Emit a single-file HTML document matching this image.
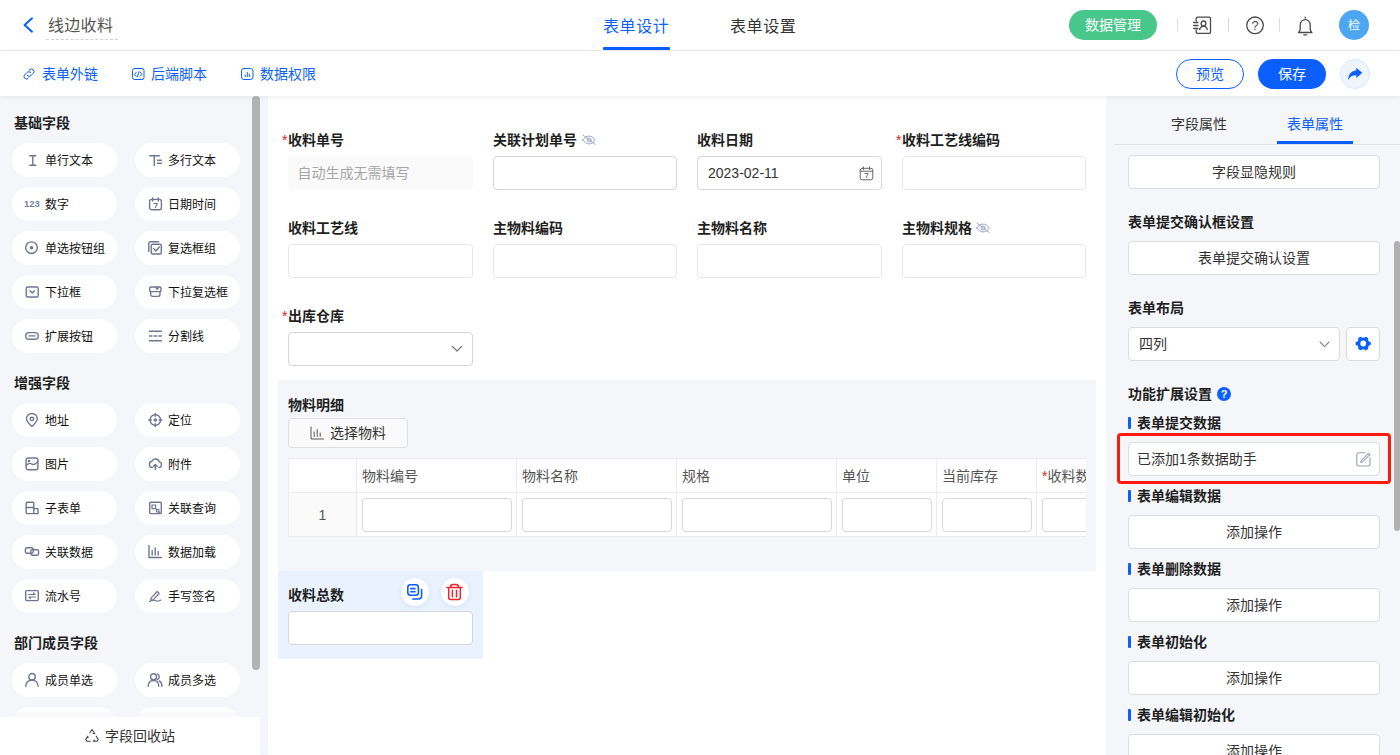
<!DOCTYPE html>
<html lang="zh-CN"><head><meta charset="utf-8"><title>线边收料</title>
<style>
*{box-sizing:border-box;margin:0;padding:0}
html,body{width:1400px;height:755px;overflow:hidden;background:#fff}
body{font-family:"Liberation Sans","Noto Sans CJK SC",sans-serif;font-size:14px;color:#333;position:relative}
.abs{position:absolute}
.t{position:absolute;white-space:nowrap;line-height:20px;height:20px}
svg{position:absolute;overflow:visible}
#hdr{position:absolute;left:0;top:0;width:1400px;height:51px;background:#fff;border-bottom:1px solid #ebecee}
#bar{position:absolute;left:0;top:51px;width:1400px;height:45px;background:#fff;box-shadow:0 1px 5px rgba(0,0,0,.07);z-index:5}
#left{position:absolute;left:0;top:96px;width:268px;height:659px;background:#f5f6fa;overflow:hidden}
#canvas{position:absolute;left:268px;top:96px;width:838px;height:659px;background:#fff;overflow:hidden}
#right{position:absolute;left:1106px;top:96px;width:294px;height:659px;background:#f5f6fa;overflow:hidden}
.pill{position:absolute;width:105px;height:34px;border-radius:17px;background:#fff;font-size:12px;line-height:34px;color:#111;white-space:nowrap}
.pill span{position:absolute;left:33px;top:1px}
.pill svg{left:13px;top:10px;width:14px;height:14px}
.h{position:absolute;left:14px;font-weight:700;font-size:14px;line-height:20px;color:#1f1f1f;white-space:nowrap}
.lab{position:absolute;font-weight:700;font-size:14px;line-height:20px;color:#1f1f1f;white-space:nowrap}
.req{color:#e02020;font-weight:400;position:absolute;left:-6px;top:0}
.inp{position:absolute;height:34px;border:1px solid #e8e8e8;border-radius:4px;background:#fff}
.inp.d{border-color:#d6d6d6}
.rbtn{position:absolute;left:22px;width:252px;height:34px;border:1px solid #dcdde0;border-radius:4px;background:#fff;text-align:center;line-height:32px;font-size:14px;color:#333}
.sub{position:absolute;left:31px;font-weight:700;font-size:14px;line-height:20px;color:#1f1f1f;white-space:nowrap}
.sub i{position:absolute;left:-9px;top:4px;width:3px;height:12px;background:#0b5fff;border-radius:1px}
.cir{position:absolute;width:28px;height:28px;border-radius:14px;background:#fff;box-shadow:0 1px 4px rgba(80,130,255,.18)}
</style></head><body>
<div id="hdr">
<svg style="left:21px;top:16px" width="14" height="18" viewBox="0 0 14 18"><path d="M11 2.300L3.600 9l7.400 6.700" fill="none" stroke="#0b5fff" stroke-width="2" stroke-linecap="round" stroke-linejoin="round"/></svg>
<div class="t" style="left:48px;top:15px;font-size:16px;line-height:22px;height:22px;color:#555;letter-spacing:.3px">线边收料</div>
<div class="abs" style="left:46px;top:39px;width:72px;height:0;border-top:1px dashed #d0d0d0"></div>
<div class="t" style="left:603px;top:15.500px;font-size:16px;line-height:22px;height:22px;letter-spacing:.6px;color:#0b5fff">表单设计</div>
<div class="abs" style="left:603px;top:47px;width:67px;height:3px;background:#0b5fff;border-radius:1px"></div>
<div class="t" style="left:730px;top:15.500px;font-size:16px;line-height:22px;height:22px;letter-spacing:.6px;color:#333">表单设置</div>
<div class="abs" style="left:1069px;top:10px;width:88px;height:30px;border-radius:15px;background:#47c78a;color:#fff;font-size:14px;line-height:31px;text-align:center">数据管理</div>
<div class="abs" style="left:1177px;top:18px;width:1px;height:14px;background:#dcdcdc"></div>
<div class="abs" style="left:1228px;top:18px;width:1px;height:14px;background:#dcdcdc"></div>
<div class="abs" style="left:1279px;top:18px;width:1px;height:14px;background:#dcdcdc"></div>
<svg style="left:1192px;top:16px" width="20" height="19" viewBox="0 0 20 19" fill="none" stroke="#4a4a4a" stroke-width="1.300" stroke-linecap="round"><path d="M4.200 5V2.600a1.500 1.500 0 0 1 1.500-1.500h11.300a1.500 1.500 0 0 1 1.500 1.500v13.300a1.500 1.500 0 0 1-1.500 1.500H5.700a1.500 1.500 0 0 1-1.500-1.500V14"/><circle cx="11.500" cy="7.400" r="2.400"/><path d="M7.700 13.600c.3-2.200 1.800-3.300 3.800-3.300s3.500 1.100 3.800 3.300"/><path d="M1.700 6.500h4.300M1.700 9.500h4.300M1.700 12.500h4.300"/></svg>
<svg style="left:1245px;top:16px" width="20" height="19" viewBox="0 0 20 19" fill="none" stroke="#4a4a4a" stroke-width="1.300"><circle cx="10" cy="9.300" r="8.300"/></svg>
<div class="t" style="left:1245px;top:15.500px;width:20px;text-align:center;font-size:13px;color:#4a4a4a">?</div>
<svg style="left:1296px;top:15.500px" width="18" height="21" viewBox="0 0 18 21" fill="none" stroke="#4a4a4a" stroke-width="1.300" stroke-linecap="round" stroke-linejoin="round"><path d="M9.200 1.200v.800"/><path d="M4.200 13.200V8.700a5 5 0 0 1 10 0v4.500c0 1.300.7 2.300 1.700 3.300H2.500c1-1 1.700-2 1.700-3.300z"/><path d="M7.700 18.800h3"/></svg>
<div class="abs" style="left:1339px;top:10px;width:30px;height:30px;border-radius:15px;background:#4ca6f2;color:#fff;font-size:12px;line-height:32px;text-align:center">检</div>
</div>
<div id="bar">
<svg style="left:22px;top:16px" width="14" height="14" viewBox="0 0 14 14" fill="none" stroke="#0b5fff" stroke-width="1" stroke-linecap="round" stroke-linejoin="round"><path d="M5.400 8.600a2.500 2.500 0 0 0 3.500 0l2.600-2.600A2.500 2.500 0 0 0 8 2.500l-.8.800"/><path d="M8.600 5.400a2.500 2.500 0 0 0-3.500 0L2.500 8A2.500 2.500 0 0 0 6 11.500l.8-.8"/></svg>
<div class="t" style="left:42px;top:13px;color:#0b5fff">表单外链</div>
<svg style="left:131px;top:16px" width="14" height="14" viewBox="0 0 14 14" fill="none" stroke="#0b5fff" stroke-width="1" stroke-linecap="round" stroke-linejoin="round"><rect x="1.500" y="1.500" width="11.500" height="11" rx="2"/><path d="M5.300 5.200L3.500 7.300l1.800 1.900M9.200 5.200l1.800 2.100-1.800 1.900M8 4.800L6.500 9.600"/></svg>
<div class="t" style="left:151px;top:13px;color:#0b5fff">后端脚本</div>
<svg style="left:240px;top:16px" width="14" height="14" viewBox="0 0 14 14" fill="none" stroke="#0b5fff" stroke-width="1" stroke-linecap="round" stroke-linejoin="round"><rect x="1.500" y="1.500" width="11.500" height="11" rx="2.500"/><path d="M5.300 9.500v-1.500M7.300 9.500V5.500M9.300 9.500V7"/></svg>
<div class="t" style="left:260px;top:13px;color:#0b5fff">数据权限</div>
<div class="abs" style="left:1176px;top:8px;width:68px;height:30px;border-radius:15px;border:1px solid #0b5fff;color:#0b5fff;font-size:14px;line-height:29px;text-align:center;background:#fff">预览</div>
<div class="abs" style="left:1258px;top:8px;width:68px;height:30px;border-radius:15px;background:#0b5fff;color:#fff;font-size:14px;line-height:31px;text-align:center">保存</div>
<div class="abs" style="left:1340px;top:8px;width:30px;height:30px;border-radius:15px;background:#eff5ff;border:1px solid #d9e6ff"></div>
<svg style="left:1340px;top:8px" width="30" height="30" viewBox="1340 59 30 30"><path d="M1356.200 67.700L1362.300 72.800 1356.300 78V75.200C1352.500 75.200 1350 76.500 1348.100 80.200 1348.100 74.500 1351.500 70.800 1356.200 70.500z" fill="#0b5fff"/></svg>
</div>
<div id="left">
<div class="h" style="top:17px">基础字段</div>
<div class="pill" style="left:12px;top:47px"><svg viewBox="0 0 14 14" fill="none" stroke="#6f7694" stroke-width="1.4" stroke-linecap="round" stroke-linejoin="round"><path d="M4.800 2.700h6M7.800 2.700v9.600M4.800 12.300h6"/></svg><span>单行文本</span></div>
<div class="pill" style="left:135px;top:47px"><svg viewBox="0 0 14 14" fill="none" stroke="#6f7694" stroke-width="1.4" stroke-linecap="round" stroke-linejoin="round"><path d="M1.800 2.700h9.500M6.300 2.700v9.800M9.600 7.300h3.700M9.600 10.200h3.700"/></svg><span>多行文本</span></div>
<div class="pill" style="left:12px;top:91px"><div style="position:absolute;left:12px;top:-.5px;font-size:9.5px;font-weight:700;color:#7482a6">123</div><span>数字</span></div>
<div class="pill" style="left:135px;top:91px"><svg viewBox="0 0 14 14" fill="none" stroke="#6f7694" stroke-width="1.4" stroke-linecap="round" stroke-linejoin="round"><rect x="1.600" y="2.400" width="11.800" height="10.300" rx="2"/><path d="M4.700 1v3M10.300 1v3"/><path d="M5.700 6.500h3.600l-2 4.200" stroke-width="1.100"/></svg><span>日期时间</span></div>
<div class="pill" style="left:12px;top:135px"><svg viewBox="0 0 14 14" fill="none" stroke="#6f7694" stroke-width="1.4" stroke-linecap="round" stroke-linejoin="round"><circle cx="6.500" cy="6.700" r="5.800"/><circle cx="6.500" cy="6.700" r="1.100" fill="#6f7694"/></svg><span>单选按钮组</span></div>
<div class="pill" style="left:135px;top:135px"><svg viewBox="0 0 14 14" fill="none" stroke="#6f7694" stroke-width="1.4" stroke-linecap="round" stroke-linejoin="round"><path d="M.8 10.500V2.300A1.500 1.500 0 0 1 2.300.800h8.200"/><rect x="3.200" y="3.200" width="10.100" height="9.800" rx="1.500"/><path d="M5.700 7.600l2.200 2.400 3.500-4"/></svg><span>复选框组</span></div>
<div class="pill" style="left:12px;top:179px"><svg viewBox="0 0 14 14" fill="none" stroke="#6f7694" stroke-width="1.4" stroke-linecap="round" stroke-linejoin="round"><rect x="1.200" y="2" width="12" height="10" rx="1.500"/><path d="M5 5.800l2.200 2.300 2.200-2.300"/></svg><span>下拉框</span></div>
<div class="pill" style="left:135px;top:179px"><svg viewBox="0 0 14 14" fill="none" stroke="#6f7694" stroke-width="1.4" stroke-linecap="round" stroke-linejoin="round"><rect x="1.700" y="2" width="11.300" height="4.600" rx="1.200"/><path d="M7.500 2.300l1.700 2 1.600-2" stroke-width="1.100"/><path d="M2.700 6.600v3a1.800 1.800 0 0 0 1.800 1.800h5.700a1.800 1.800 0 0 0 1.800-1.800v-3"/></svg><span>下拉复选框</span></div>
<div class="pill" style="left:12px;top:223px"><svg viewBox="0 0 14 14" fill="none" stroke="#6f7694" stroke-width="1.4" stroke-linecap="round" stroke-linejoin="round"><rect x=".7" y="3.600" width="12.600" height="6.600" rx="3.300"/><path d="M4 6.900h6"/></svg><span>扩展按钮</span></div>
<div class="pill" style="left:135px;top:223px"><svg viewBox="0 0 14 14" fill="none" stroke="#6f7694" stroke-width="1.4" stroke-linecap="round" stroke-linejoin="round"><path d="M1.400 2.300h12M1.400 11.700h12M1.400 7h2.500M6.100 7h2.600M10.900 7h2.500"/></svg><span>分割线</span></div>
<div class="h" style="top:277px">增强字段</div>
<div class="pill" style="left:12px;top:307px"><svg viewBox="0 0 14 14" fill="none" stroke="#6f7694" stroke-width="1.4" stroke-linecap="round" stroke-linejoin="round"><path d="M6.900 13.400C3.300 10 1.500 7.800 1.500 5.900a5.400 5.400 0 0 1 10.800 0c0 1.900-1.800 4.100-5.400 7.500z"/><circle cx="6.900" cy="5.900" r="1.700"/></svg><span>地址</span></div>
<div class="pill" style="left:135px;top:307px"><svg viewBox="0 0 14 14" fill="none" stroke="#6f7694" stroke-width="1.4" stroke-linecap="round" stroke-linejoin="round"><circle cx="7.3" cy="7" r="5.3"/><circle cx="7.3" cy="7" r="1.1" fill="#6f7694"/><path d="M7.3 .5v2.700M7.3 10.800v2.700M.8 7h2.700M11.100 7h2.700"/></svg><span>定位</span></div>
<div class="pill" style="left:12px;top:351px"><svg viewBox="0 0 14 14" fill="none" stroke="#6f7694" stroke-width="1.4" stroke-linecap="round" stroke-linejoin="round"><rect x="1.100" y="1" width="11.800" height="11.800" rx="2"/><path d="M1.300 8.300c2-2 3.800-2.500 5.300-1.300s3.300.8 6.200-2.200"/><circle cx="4" cy="4" r=".6"/></svg><span>图片</span></div>
<div class="pill" style="left:135px;top:351px"><svg viewBox="0 0 14 14" fill="none" stroke="#6f7694" stroke-width="1.4" stroke-linecap="round" stroke-linejoin="round"><path d="M4.300 10.600a3.200 3.200 0 0 1-.5-6.300 4 4 0 0 1 7.500.600 2.900 2.900 0 0 1-.4 5.700"/><path d="M7.300 12.500V7.700M5.300 9.500l2-2 2 2"/></svg><span>附件</span></div>
<div class="pill" style="left:12px;top:395px"><svg viewBox="0 0 14 14" fill="none" stroke="#6f7694" stroke-width="1.4" stroke-linecap="round" stroke-linejoin="round"><rect x="1.200" y="1.200" width="7.600" height="11.400" rx="1"/><path d="M1.200 6.500h7.600M8.800 7.600h4.200v5h-4.200"/></svg><span>子表单</span></div>
<div class="pill" style="left:135px;top:395px"><svg viewBox="0 0 14 14" fill="none" stroke="#6f7694" stroke-width="1.4" stroke-linecap="round" stroke-linejoin="round"><rect x="1.700" y="1.200" width="11.600" height="11.400" rx="1.200"/><path d="M4 4h3.600v3.600H4zM7.600 7.600l1 1" stroke-width="1.200"/><circle cx="9.700" cy="9.700" r="1.400" stroke-width="1.200"/><path d="M10.800 10.800l1.400 1.400" stroke-width="1.200"/></svg><span>关联查询</span></div>
<div class="pill" style="left:12px;top:439px"><svg viewBox="0 0 14 14" fill="none" stroke="#6f7694" stroke-width="1.4" stroke-linecap="round" stroke-linejoin="round"><rect x=".4" y="2.8" width="7.800" height="5.400" rx="1.400"/><rect x="5.800" y="4.800" width="7.800" height="5.400" rx="1.400"/></svg><span>关联数据</span></div>
<div class="pill" style="left:135px;top:439px"><svg viewBox="0 0 14 14" fill="none" stroke="#6f7694" stroke-width="1.4" stroke-linecap="round" stroke-linejoin="round"><path d="M1 .500v12h12.500M4.200 10V5.500M7.200 10V3M10.200 10V6.500"/></svg><span>数据加载</span></div>
<div class="pill" style="left:12px;top:483px"><svg viewBox="0 0 14 14" fill="none" stroke="#6f7694" stroke-width="1.4" stroke-linecap="round" stroke-linejoin="round"><rect x=".7" y="1.600" width="12.600" height="10" rx="1"/><path d="M3.500 5.500h6.500L8.500 4M10.500 8H4l1.500 1.500" stroke-width="1.200"/></svg><span>流水号</span></div>
<div class="pill" style="left:135px;top:483px"><svg viewBox="0 0 14 14" fill="none" stroke="#6f7694" stroke-width="1.4" stroke-linecap="round" stroke-linejoin="round"><path d="M3.200 8.800l6-6.300 2 2-6 6.300-2.600.6z" stroke-width="1.200"/><path d="M1.500 12.500c3-1.500 5-1.500 6.500-.8s3 .6 5-.6" stroke-width="1.200"/></svg><span>手写签名</span></div>
<div class="h" style="top:537px">部门成员字段</div>
<div class="pill" style="left:12px;top:567px"><svg viewBox="0 0 14 14" fill="none" stroke="#6f7694" stroke-width="1.4" stroke-linecap="round" stroke-linejoin="round"><circle cx="7" cy="3.700" r="3.200"/><path d="M.9 13.300c0-3.800 2.500-6 6.100-6s6.100 2.200 6.100 6"/></svg><span>成员单选</span></div>
<div class="pill" style="left:135px;top:567px"><svg viewBox="0 0 14 14" fill="none" stroke="#6f7694" stroke-width="1.4" stroke-linecap="round" stroke-linejoin="round"><circle cx="5.500" cy="3.700" r="3"/><path d="M.2 13.300c0-3.600 2.100-5.800 5.300-5.800s5.300 2.200 5.300 5.800M9.300.900a3 3 0 0 1 0 5.600M11.300 7.900c1.700.9 2.600 2.700 2.600 5.400"/></svg><span>成员多选</span></div>
<div class="pill" style="left:12px;top:611px"></div><div class="pill" style="left:135px;top:611px"></div>
<div class="abs" style="left:252px;top:0;width:8px;height:574px;border-radius:4px;background:#b3b3b3"></div>
<div class="abs" style="left:0;top:621px;width:260px;height:38px;background:#fff;box-shadow:0 -3px 6px rgba(245,246,250,.9)"></div>
<svg style="left:84px;top:632px" width="16" height="16" viewBox="0 0 16 16" fill="none" stroke="#444" stroke-width="1.100" stroke-linecap="round" stroke-linejoin="round"><path d="M5.800 4.800L8 1.500l2.800 4.300-1.500-.3M12.200 8.200l2 3.200-1 1.800H9.300l1.200-1.100M6.300 13.200H2.800l-1-1.800 2-3.200.2 1.500"/></svg>
<div class="t" style="left:105px;top:630px;color:#333">字段回收站</div>
</div>
<div id="canvas">
<div class="lab" style="left:20px;top:34px"><span class="req">*</span>收料单号</div>
<div class="inp " style="left:20px;top:60px;width:185px;background:#fafafa;border-color:#fafafa"><span style="position:absolute;left:8.5px;top:0;line-height:33px;color:#a6a6a6;font-size:14px;white-space:nowrap">自动生成无需填写</span></div>
<div class="lab" style="left:225px;top:34px">关联计划单号</div>
<svg style="left:313.5px;top:36.5px" width="14" height="14" viewBox="0 0 14 14" fill="none" stroke="#9aa4c8" stroke-width="1" stroke-linecap="round"><path d="M.8 7c1.700-2.600 3.800-3.900 6.200-3.900s4.500 1.300 6.200 3.900c-1.700 2.600-3.800 3.900-6.200 3.900S2.500 9.600.8 7z"/><circle cx="7" cy="7" r="2"/><path d="M1.300 2.300l11.800 9.200"/></svg>
<div class="inp d" style="left:225px;top:60px;width:184px;"></div>
<div class="lab" style="left:429px;top:34px">收料日期</div>
<div class="inp d" style="left:429px;top:60px;width:185px;"><span style="position:absolute;left:10px;top:0;line-height:33px;color:#333;font-size:14px">2023-02-11</span><svg style="left:161px;top:9px" width="15" height="15" viewBox="0 0 15 15" fill="none" stroke="#666" stroke-width="1" stroke-linecap="round"><rect x="1.200" y="2.300" width="12.600" height="11.500" rx="2"/><path d="M1.200 5.200h12.600M4.500 1v2.500M10.500 1v2.500"/><path d="M6 7.500h3.200l-1.900 4.200" stroke-width=".9"/></svg></div>
<div class="lab" style="left:634px;top:34px"><span class="req">*</span>收料工艺线编码</div>
<div class="inp " style="left:634px;top:60px;width:184px;"></div>
<div class="lab" style="left:20px;top:122px">收料工艺线</div>
<div class="inp " style="left:20px;top:148px;width:185px;"></div>
<div class="lab" style="left:225px;top:122px">主物料编码</div>
<div class="inp " style="left:225px;top:148px;width:184px;"></div>
<div class="lab" style="left:429px;top:122px">主物料名称</div>
<div class="inp " style="left:429px;top:148px;width:185px;"></div>
<div class="lab" style="left:634px;top:122px">主物料规格</div>
<div class="inp " style="left:634px;top:148px;width:184px;"></div>
<svg style="left:708px;top:124.5px" width="14" height="14" viewBox="0 0 14 14" fill="none" stroke="#9aa4c8" stroke-width="1" stroke-linecap="round"><path d="M.8 7c1.700-2.600 3.800-3.900 6.200-3.900s4.500 1.300 6.200 3.900c-1.700 2.600-3.800 3.900-6.200 3.900S2.500 9.600.8 7z"/><circle cx="7" cy="7" r="2"/><path d="M1.300 2.300l11.800 9.200"/></svg>
<div class="lab" style="left:20px;top:210px"><span class="req">*</span>出库仓库</div>
<div class="inp d" style="left:20px;top:236px;width:185px;"><svg style="left:162px;top:12px" width="12" height="8" viewBox="0 0 12 8" fill="none" stroke="#777" stroke-width="1.200" stroke-linecap="round" stroke-linejoin="round"><path d="M1.500 1.500L6 6l4.500-4.500"/></svg></div>
<div class="abs" style="left:10px;top:284px;width:818px;height:191px;background:#f5f6fa"></div>
<div class="lab" style="left:20px;top:299px">物料明细</div>
<div class="abs" style="left:20px;top:322px;width:120px;height:30px;border:1px solid #dedede;border-radius:4px;background:#fafafa"></div>
<svg style="left:42px;top:330px" width="14" height="14" viewBox="0 0 14 14" fill="none" stroke="#555" stroke-width="1" stroke-linecap="round" stroke-linejoin="round"><path d="M1 1v12h12.500M4.200 10.500V6M7.200 10.500V3.500M10.200 10.500V7"/></svg>
<div class="t" style="left:62px;top:327px;color:#333">选择物料</div>
<div class="abs" style="left:20px;top:362px;width:798px;height:79px;overflow:hidden;border:1px solid #ebebeb;border-right:none;background:#fff">
<div class="abs" style="left:0px;top:0;width:68px;height:34px;border-right:1px solid #ebebeb;border-bottom:1px solid #ebebeb;background:#fff"></div><div class="abs" style="left:0px;top:34px;width:68px;height:44px;border-right:1px solid #ebebeb;background:#fafafa"></div>
<div class="abs" style="left:68px;top:0;width:160px;height:34px;border-right:1px solid #ebebeb;border-bottom:1px solid #ebebeb;background:#fff"></div><div class="abs" style="left:68px;top:34px;width:160px;height:44px;border-right:1px solid #ebebeb;background:#fff"></div>
<div class="t" style="left:73px;top:7px;color:#555">物料编号</div><div class="inp" style="left:73px;top:39px;width:150px;border-color:#d8d8d8"></div>
<div class="abs" style="left:228px;top:0;width:160px;height:34px;border-right:1px solid #ebebeb;border-bottom:1px solid #ebebeb;background:#fff"></div><div class="abs" style="left:228px;top:34px;width:160px;height:44px;border-right:1px solid #ebebeb;background:#fff"></div>
<div class="t" style="left:233px;top:7px;color:#555">物料名称</div><div class="inp" style="left:233px;top:39px;width:150px;border-color:#d8d8d8"></div>
<div class="abs" style="left:388px;top:0;width:160px;height:34px;border-right:1px solid #ebebeb;border-bottom:1px solid #ebebeb;background:#fff"></div><div class="abs" style="left:388px;top:34px;width:160px;height:44px;border-right:1px solid #ebebeb;background:#fff"></div>
<div class="t" style="left:393px;top:7px;color:#555">规格</div><div class="inp" style="left:393px;top:39px;width:150px;border-color:#d8d8d8"></div>
<div class="abs" style="left:548px;top:0;width:100px;height:34px;border-right:1px solid #ebebeb;border-bottom:1px solid #ebebeb;background:#fff"></div><div class="abs" style="left:548px;top:34px;width:100px;height:44px;border-right:1px solid #ebebeb;background:#fff"></div>
<div class="t" style="left:553px;top:7px;color:#555">单位</div><div class="inp" style="left:553px;top:39px;width:90px;border-color:#d8d8d8"></div>
<div class="abs" style="left:648px;top:0;width:100px;height:34px;border-right:1px solid #ebebeb;border-bottom:1px solid #ebebeb;background:#fff"></div><div class="abs" style="left:648px;top:34px;width:100px;height:44px;border-right:1px solid #ebebeb;background:#fff"></div>
<div class="t" style="left:653px;top:7px;color:#555">当前库存</div><div class="inp" style="left:653px;top:39px;width:90px;border-color:#d8d8d8"></div>
<div class="abs" style="left:748px;top:0;width:160px;height:34px;border-right:1px solid #ebebeb;border-bottom:1px solid #ebebeb;background:#fff"></div><div class="abs" style="left:748px;top:34px;width:160px;height:44px;border-right:1px solid #ebebeb;background:#fff"></div>
<div class="t" style="left:753px;top:7px;color:#555"><span style="color:#e02020">*</span>收料数量</div><div class="inp" style="left:753px;top:39px;width:150px;border-color:#d8d8d8"></div>
<div class="t" style="left:0;top:46px;width:67px;text-align:center;color:#555">1</div>
</div>
<div class="abs" style="left:10px;top:475px;width:205px;height:88px;background:#eaf2ff"></div>
<div class="lab" style="left:20px;top:489px">收料总数</div>
<div class="inp d" style="left:20px;top:515px;width:185px;"></div>
<div class="cir" style="left:133px;top:482px"></div>
<div class="cir" style="left:173px;top:482px"></div>
<svg style="left:133px;top:482px" width="28" height="28" viewBox="401 578 28 28" fill="none" stroke="#0b5fff" stroke-width="1.600" stroke-linecap="round" stroke-linejoin="round"><rect x="407.800" y="584.800" width="10.600" height="10.400" rx="2.600"/><path d="M410.800 588.600h4.200M410.800 591.800h4.200M421.600 589.500v6.500a3 3 0 0 1-3 3h-5.800"/></svg>
<svg style="left:173px;top:482px" width="28" height="28" viewBox="441 578 28 28" fill="none" stroke="#f5222d" stroke-width="1.500" stroke-linecap="round" stroke-linejoin="round"><path d="M447 587.500h15M450.500 587.300c0-1.800 1-2.700 2.500-2.700h3c1.500 0 2.500.9 2.500 2.700M448.700 588v9.500a2 2 0 0 0 2 2h7.600a2 2 0 0 0 2-2V588M452.400 590.300v6.400M456.500 590.300v6.400"/></svg>
</div>
<div id="right">
<div class="abs" style="left:8px;top:48px;width:286px;height:1px;background:#dfe1e6"></div>
<div class="t" style="left:65px;top:18px;color:#333">字段属性</div>
<div class="t" style="left:181px;top:18px;color:#0b5fff">表单属性</div>
<div class="abs" style="left:171px;top:45px;width:76px;height:3px;background:#0b5fff"></div>
<div class="rbtn" style="top:59px">字段显隐规则</div>
<div class="lab" style="left:22px;top:116px">表单提交确认框设置</div>
<div class="rbtn" style="top:145px">表单提交确认设置</div>
<div class="lab" style="left:22px;top:202px">表单布局</div>
<div class="rbtn" style="top:231px;width:212px;text-align:left;padding-left:10px">四列<svg style="left:190px;top:13px" width="11" height="7" viewBox="0 0 11 7" fill="none" stroke="#858585" stroke-width="1.100" stroke-linecap="round" stroke-linejoin="round"><path d="M1 1l4.500 4.700L10 1"/></svg></div>
<div class="rbtn" style="top:231px;left:240px;width:34px"><svg style="left:0;top:0" width="32" height="32" viewBox="-16.200 -15.500 32 32"><circle r="4.500" fill="none" stroke="#0b5fff" stroke-width="3.200"/><g fill="#0b5fff" transform="scale(1 .92)"><rect x="4.600" y="-1.900" width="3" height="3.800" rx="1" transform="rotate(0)"/><rect x="4.600" y="-1.900" width="3" height="3.800" rx="1" transform="rotate(60)"/><rect x="4.600" y="-1.900" width="3" height="3.800" rx="1" transform="rotate(120)"/><rect x="4.600" y="-1.900" width="3" height="3.800" rx="1" transform="rotate(180)"/><rect x="4.600" y="-1.900" width="3" height="3.800" rx="1" transform="rotate(240)"/><rect x="4.600" y="-1.900" width="3" height="3.800" rx="1" transform="rotate(300)"/></g></svg></div>
<div class="lab" style="left:22px;top:288px">功能扩展设置</div>
<div class="abs" style="left:111px;top:291px;width:14px;height:14px;border-radius:7px;background:#0b5fff;color:#fff;font-size:11px;font-weight:700;line-height:14px;text-align:center">?</div>
<div class="sub" style="top:317px"><i></i>表单提交数据</div>
<div class="abs" style="left:11px;top:337px;width:274px;height:51px;border:3px solid #fe1a0c;border-radius:4px"></div>
<div class="rbtn" style="top:346px;text-align:left;padding-left:8px;height:34px;line-height:32px">已添加1条数据助手<svg style="left:227px;top:9px" width="15" height="15" viewBox="0 0 15 15" fill="none" stroke="#9aa3bd" stroke-width="1.100" stroke-linecap="round" stroke-linejoin="round"><path d="M9 .800H3A2.200 2.200 0 0 0 .800 3v8.800A2.200 2.200 0 0 0 3 14h8.800a2.200 2.200 0 0 0 2.200-2.200V5.500"/><path d="M4.700 10.500l.7-2.200 7-7 1.400 1.400-7 7z"/></svg></div>
<div class="sub" style="top:390px"><i></i>表单编辑数据</div>
<div class="rbtn" style="top:419px">添加操作</div>
<div class="sub" style="top:463px"><i></i>表单删除数据</div>
<div class="rbtn" style="top:492px">添加操作</div>
<div class="sub" style="top:536px"><i></i>表单初始化</div>
<div class="rbtn" style="top:565px">添加操作</div>
<div class="sub" style="top:609px"><i></i>表单编辑初始化</div>
<div class="rbtn" style="top:638px">添加操作</div>
<div class="abs" style="left:288px;top:145px;width:6px;height:290px;border-radius:3px;background:#b2b2b2"></div>
</div>
</body></html>
